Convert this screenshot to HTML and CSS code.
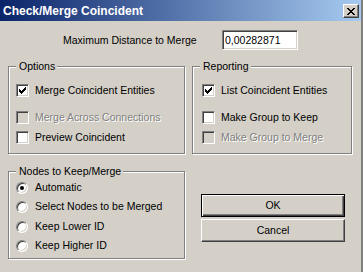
FILE: index.html
```html
<!DOCTYPE html>
<html>
<head>
<meta charset="utf-8">
<link rel="stylesheet" href="styles.css">
</head>
<body>
<div class="window">
  <div class="titlebar">
    <span class="title">Check/Merge Coincident</span>
    <span class="close"><svg width="8" height="7" viewBox="0 0 8 7" shape-rendering="crispEdges"><path fill="#000" d="M0 0h2v1H0z M6 0h2v1H6z M1 1h2v1H1z M5 1h2v1H5z M2 2h4v1H2z M3 3h2v1H3z M2 4h4v1H2z M1 5h2v1H1z M5 5h2v1H5z M0 6h2v1H0z M6 6h2v1H6z"/></svg></span>
  </div>
  <div class="distance-row">
    <span class="distance-label">Maximum Distance to Merge</span>
    <input class="field" type="text" value="0,00282871">
  </div>
  <div class="groups-row">
    <div class="group group-options">
      <div class="group-title">Options</div>
      <div class="check-row row-1"><span class="checkbox"><svg width="7" height="7" viewBox="0 0 7 7" shape-rendering="crispEdges"><path fill="#000" d="M0 2h1v3H0z M1 3h1v3H1z M2 4h1v3H2z M3 3h1v3H3z M4 2h1v3H4z M5 1h1v3H5z M6 0h1v3H6z"/></svg></span><span class="text">Merge Coincident Entities</span></div>
      <div class="check-row row-2 disabled"><span class="checkbox"></span><span class="text">Merge Across Connections</span></div>
      <div class="check-row row-3"><span class="checkbox"></span><span class="text">Preview Coincident</span></div>
    </div>
    <div class="group group-reporting">
      <div class="group-title">Reporting</div>
      <div class="check-row row-1"><span class="checkbox"><svg width="7" height="7" viewBox="0 0 7 7" shape-rendering="crispEdges"><path fill="#000" d="M0 2h1v3H0z M1 3h1v3H1z M2 4h1v3H2z M3 3h1v3H3z M4 2h1v3H4z M5 1h1v3H5z M6 0h1v3H6z"/></svg></span><span class="text">List Coincident Entities</span></div>
      <div class="check-row row-2"><span class="checkbox"></span><span class="text">Make Group to Keep</span></div>
      <div class="check-row row-3 disabled"><span class="checkbox"></span><span class="text">Make Group to Merge</span></div>
    </div>
  </div>
  <div class="bottom-row">
    <div class="group group-nodes">
      <div class="group-title">Nodes to Keep/Merge</div>
      <div class="radio-row radio-1"><span class="radio"><span class="dot"></span></span><span class="text">Automatic</span></div>
      <div class="radio-row radio-2"><span class="radio"></span><span class="text">Select Nodes to be Merged</span></div>
      <div class="radio-row radio-3"><span class="radio"></span><span class="text">Keep Lower ID</span></div>
      <div class="radio-row radio-4"><span class="radio"></span><span class="text">Keep Higher ID</span></div>
    </div>
    <div class="buttons">
      <button class="btn btn-default">OK</button>
      <button class="btn">Cancel</button>
    </div>
  </div>
</div>
</body>
</html>
```

FILE: styles.css
```css
html, body {
  margin: 0;
  padding: 0;
}
body {
  width: 363px;
  height: 272px;
  overflow: hidden;
  background: #D4D0C8;
  font: 10.5px/13px "Liberation Sans", Arial, sans-serif;
  color: #000;
}
.window {
  box-sizing: border-box;
  width: 363px;
  height: 272px;
  border-right: 2px solid #808080;
  background: #D4D0C8;
}
.titlebar {
  box-sizing: border-box;
  height: 21px;
  display: flex;
  align-items: flex-start;
  justify-content: space-between;
  padding: 0 2px 0 3px;
  background: linear-gradient(to right, #0A246A, #A6CAF0);
}
.title {
  padding-top: 5px;
  font-weight: bold;
  font-size: 12px;
  line-height: 13px;
  color: #fff;
}
.close {
  box-sizing: border-box;
  display: block;
  width: 16px;
  height: 14px;
  margin-top: 4px;
  padding: 3px 0 0 3px;
  background: #D4D0C8;
  border: 1px solid;
  border-color: #fff #404040 #404040 #fff;
  box-shadow: inset -1px -1px #808080;
}
.close svg {
  display: block;
}
.distance-row {
  display: flex;
  align-items: center;
  margin-top: 9px;
  padding-left: 63px;
}
.distance-label {
  width: 159px;
}
.field {
  box-sizing: border-box;
  width: 76px;
  height: 20px;
  margin: 0;
  padding: 0 2px;
  border: 1px solid;
  border-color: #808080 #fff #fff #808080;
  box-shadow: inset 1px 1px #404040, inset -1px -1px #D4D0C8;
  background: #fff;
  font: inherit;
  color: #000;
  outline: none;
}
.groups-row {
  display: flex;
  gap: 7px;
  margin-top: 16px;
  padding-left: 8px;
}
.group {
  box-sizing: border-box;
  height: 88px;
  border: 1px solid #808080;
  box-shadow: inset 1px 1px #fff, 1px 1px #fff;
}
.group-options,
.group-nodes {
  width: 177px;
}
.group-reporting {
  width: 160px;
}
.group-title {
  width: fit-content;
  margin: -7px 0 0 7px;
  padding: 0 2px 0 3px;
  background: #D4D0C8;
  line-height: 13px;
}
.check-row,
.radio-row {
  display: flex;
  align-items: center;
  height: 13px;
  margin-left: 7px;
}
.group-reporting .check-row {
  margin-left: 9px;
}
.row-1 { margin-top: 11px; }
.row-2 { margin-top: 14px; }
.row-3 { margin-top: 7px; }
.checkbox {
  box-sizing: border-box;
  flex: none;
  width: 13px;
  height: 13px;
  margin-right: 6px;
  display: flex;
  align-items: center;
  justify-content: center;
  border: 1px solid;
  border-color: #808080 #fff #fff #808080;
  box-shadow: inset 1px 1px #404040, inset -1px -1px #D4D0C8;
  background: #fff;
}
.checkbox svg {
  display: block;
}
.disabled .checkbox {
  background: #D4D0C8;
}
.disabled .text {
  color: #808080;
  text-shadow: 1px 1px #fff;
}
.radio {
  box-sizing: border-box;
  flex: none;
  width: 12px;
  height: 12px;
  margin-right: 7px;
  display: flex;
  align-items: center;
  justify-content: center;
  border-radius: 50%;
  border: 1px solid;
  border-color: #808080 #fff #fff #808080;
  box-shadow: inset 1px 1px #404040, inset -1px -1px #D4D0C8;
  background: #fff;
}
.dot {
  width: 4px;
  height: 4px;
  border-radius: 50%;
  background: #000;
}
.radio-1 { margin-top: 3px; }
.radio-2 { margin-top: 6px; }
.radio-3 { margin-top: 7px; }
.radio-4 { margin-top: 6px; }
.bottom-row {
  display: flex;
  margin-top: 17px;
  padding-left: 8px;
}
.buttons {
  display: flex;
  flex-direction: column;
  gap: 2px;
  margin-left: 16px;
  padding-top: 23px;
}
.btn {
  box-sizing: border-box;
  width: 144px;
  height: 23px;
  margin: 0;
  padding: 0;
  font: inherit;
  color: #000;
  background: #D4D0C8;
  border: 1px solid;
  border-color: #fff #404040 #404040 #fff;
  box-shadow: inset -1px -1px #808080;
}
.btn-default {
  border-color: #000;
  box-shadow: inset 1px 1px #fff, inset -1px -1px #404040, inset -2px -2px #808080;
}
```
